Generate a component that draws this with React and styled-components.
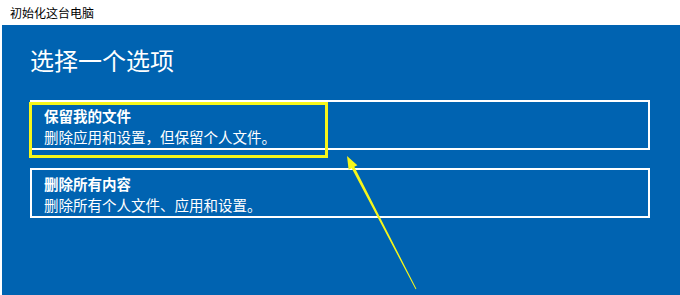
import React from 'react'
import styled, { createGlobalStyle } from 'styled-components'

const Global = createGlobalStyle`
  html, body { margin: 0; padding: 0; background: #fff; }
  body { font-family: "Noto Sans CJK SC", "Noto Sans", sans-serif; }
`

const Window = styled.div`
  position: relative;
  width: 680px;
  height: 295px;
  display: flex;
  flex-direction: column;
  overflow: hidden;
`

const TitleBar = styled.div`
  height: 25px;
  display: flex;
  align-items: center;
  padding-left: 10px;
  font-size: 12px;
  color: #000;
  background: #fff;
`

const Panel = styled.div`
  flex: 1;
  margin-left: 2px;
  background: #0063b1;
  padding: 20px 28px 0;
  color: #fff;
`

const Heading = styled.h1`
  margin: 0 0 25px;
  font-size: 24px;
  font-weight: 400;
  line-height: 30px;
`

const OptionList = styled.div`
  display: flex;
  flex-direction: column;
  gap: 18px;
  width: 620px;
`

const Option = styled.div`
  box-sizing: border-box;
  height: 50px;
  border: 2px solid #fff;
  padding: 2px 12px 0;
  display: flex;
  flex-direction: column;
  justify-content: center;
`

const OptionTitle = styled.div`
  font-size: 14.5px;
  font-weight: 700;
  line-height: 20px;
`

const OptionDesc = styled.div`
  font-size: 14.5px;
  line-height: 21px;
`

const Annotation = styled.svg`
  position: absolute;
  left: 0;
  top: 0;
  pointer-events: none;
`

const options = [
  { title: '保留我的文件', desc: '删除应用和设置，但保留个人文件。' },
  { title: '删除所有内容', desc: '删除所有个人文件、应用和设置。' },
]

export default function App() {
  return (
    <>
      <Global />
      <Window>
        <TitleBar>初始化这台电脑</TitleBar>
        <Panel>
          <Heading>选择一个选项</Heading>
          <OptionList>
            {options.map((o) => (
              <Option key={o.title}>
                <OptionTitle>{o.title}</OptionTitle>
                <OptionDesc>{o.desc}</OptionDesc>
              </Option>
            ))}
          </OptionList>
        </Panel>
        <Annotation width="680" height="295" viewBox="0 0 680 295">
          <rect x="30.5" y="103.5" width="296" height="53" fill="none" stroke="#f6f61a" strokeWidth="3" />
          <polygon
            points="347,156 357.4,165.2 354.3,166.8 416.4,288.8 415.6,289.2 351.7,168.2 348.6,169.8"
            fill="#f6f61a"
          />
        </Annotation>
      </Window>
    </>
  )
}
